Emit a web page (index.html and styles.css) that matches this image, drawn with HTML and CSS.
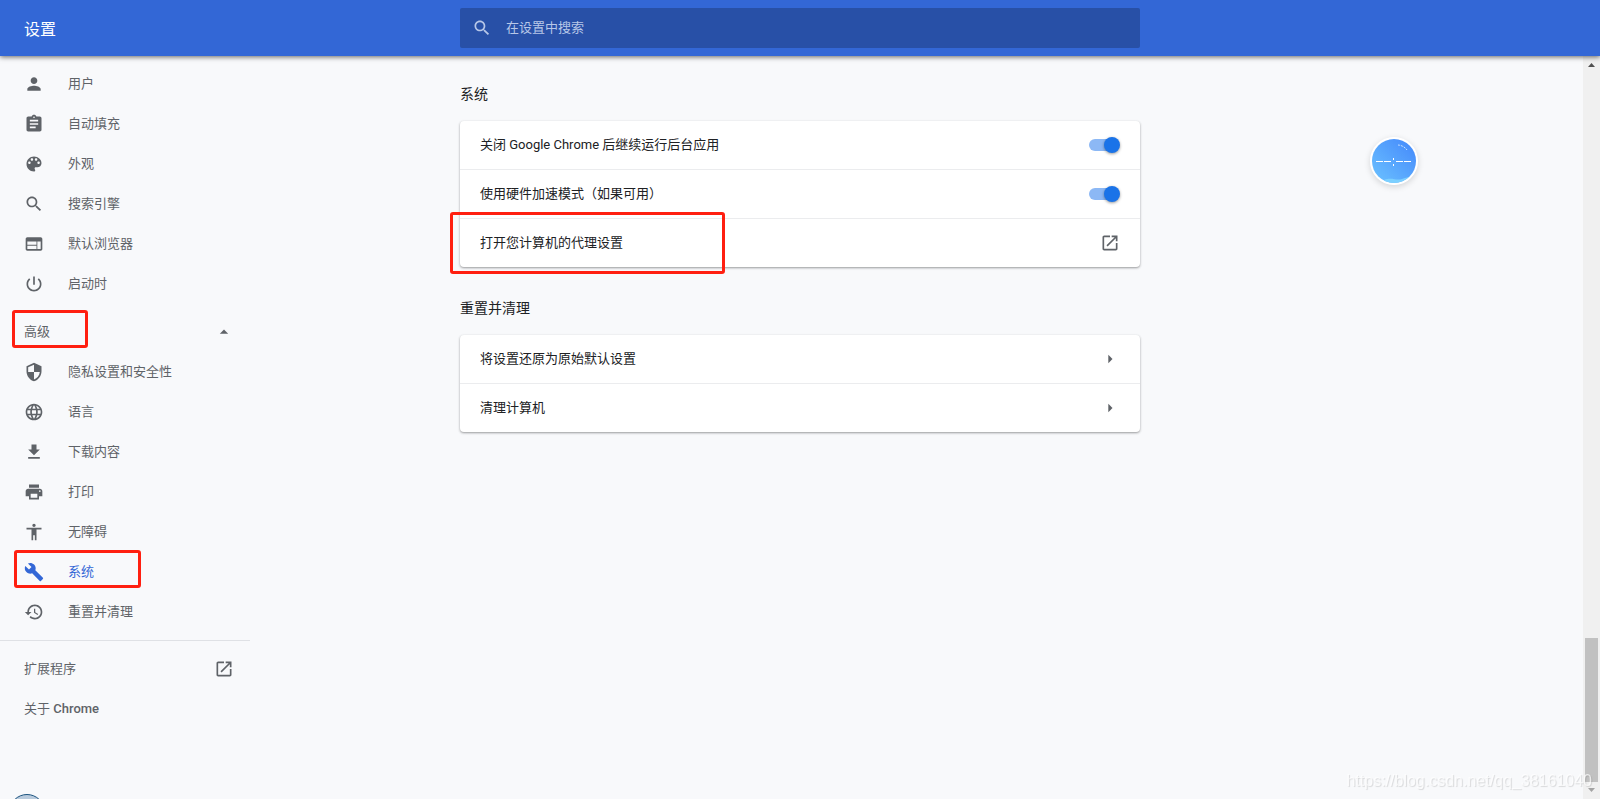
FILE: index.html
```html
<!DOCTYPE html>
<html lang="zh-CN">
<head>
<meta charset="utf-8">
<title>设置</title>
<link rel="stylesheet" href="styles.css">
</head>
<body>
<svg class="sprite" aria-hidden="true">
  <symbol id="search" viewBox="0 0 24 24"><path d="M15.5 14h-.79l-.28-.27C15.41 12.59 16 11.11 16 9.5 16 5.91 13.09 3 9.5 3S3 5.91 3 9.5 5.91 16 9.5 16c1.61 0 3.09-.59 4.23-1.57l.27.28v.79l5 4.99L20.49 19l-4.99-5zm-6 0C7.01 14 5 11.99 5 9.5S7.01 5 9.5 5 14 7.01 14 9.5 11.99 14 9.5 14z"/></symbol>
  <symbol id="launch" viewBox="0 0 24 24"><path d="M19 19H5V5h7V3H5c-1.11 0-2 .9-2 2v14c0 1.1.89 2 2 2h14c1.1 0 2-.9 2-2v-7h-2v7zM14 3v2h3.59l-9.83 9.83 1.41 1.41L19 6.41V10h2V3h-7z"/></symbol>
  <symbol id="next" viewBox="0 0 24 24"><path d="M10 17l5-5-5-5z"/></symbol>
</svg>
<header class="toolbar">
  <h1 class="toolbar-title">设置</h1>
  <label class="search">
    <svg class="icon search-icon"><use href="#search"/></svg>
    <input class="search-input" type="text" placeholder="在设置中搜索" aria-label="在设置中搜索">
  </label>
</header>
<div class="page">
  <nav class="sidebar">
    <a class="item" href="#people"><svg class="icon" viewBox="0 0 24 24"><path d="M12 12c2.21 0 4-1.79 4-4s-1.79-4-4-4-4 1.79-4 4 1.79 4 4 4zm0 2c-2.67 0-8 1.34-8 4v2h16v-2c0-2.66-5.33-4-8-4z"/></svg><span class="text">用户</span></a>
    <a class="item" href="#autofill"><svg class="icon" viewBox="0 0 24 24"><path d="M19 3h-4.18C14.4 1.84 13.3 1 12 1c-1.3 0-2.4.84-2.82 2H5c-1.1 0-2 .9-2 2v14c0 1.1.9 2 2 2h14c1.1 0 2-.9 2-2V5c0-1.1-.9-2-2-2zm-7 0c.55 0 1 .45 1 1s-.45 1-1 1-1-.45-1-1 .45-1 1-1zm2 14H7v-2h7v2zm3-4H7v-2h10v2zm0-4H7V7h10v2z"/></svg><span class="text">自动填充</span></a>
    <a class="item" href="#appearance"><svg class="icon" viewBox="0 0 24 24"><path d="M12 3c-4.97 0-9 4.03-9 9s4.03 9 9 9c.83 0 1.5-.67 1.5-1.5 0-.39-.15-.74-.39-1.01-.23-.26-.38-.61-.38-.99 0-.83.67-1.5 1.5-1.5H16c2.76 0 5-2.24 5-5 0-4.42-4.03-8-9-8zm-5.5 9c-.83 0-1.5-.67-1.5-1.5S5.67 9 6.5 9 8 9.67 8 10.5 7.33 12 6.500 12zm3-4C8.670 8 8 7.330 8 6.500S8.670 5 9.500 5s1.500.67 1.500 1.500S10.330 8 9.500 8zm5 0c-.83 0-1.500-.67-1.500-1.500S13.670 5 14.500 5s1.500.67 1.500 1.500S15.330 8 14.500 8zm3 4c-.83 0-1.500-.67-1.500-1.500S16.670 9 17.500 9s1.500.67 1.500 1.500-.67 1.500-1.500 1.500z"/></svg><span class="text">外观</span></a>
    <a class="item" href="#search-engine"><svg class="icon"><use href="#search"/></svg><span class="text">搜索引擎</span></a>
    <a class="item" href="#browser"><svg class="icon" viewBox="0 0 24 24"><path d="M20 4H4c-1.100 0-1.990.9-1.990 2L2 18c0 1.100.9 2 2 2h16c1.100 0 2-.9 2-2V6c0-1.100-.9-2-2-2zm-5 14H4v-4h11v4zm0-5H4V9h11v4zm5 5h-4V9h4v9z"/></svg><span class="text">默认浏览器</span></a>
    <a class="item" href="#startup"><svg class="icon" viewBox="0 0 24 24"><path d="M13 3h-2v10h2V3zm4.830 2.170l-1.420 1.420C17.990 7.860 19 9.810 19 12c0 3.870-3.130 7-7 7s-7-3.130-7-7c0-2.190 1.010-4.140 2.580-5.420L6.170 5.170C4.230 6.820 3 9.260 3 12c0 4.970 4.030 9 9 9s9-4.030 9-9c0-2.740-1.230-5.180-3.170-6.830z"/></svg><span class="text">启动时</span></a>
    <button class="item advanced" type="button" aria-expanded="true"><span class="text">高级</span><svg class="icon end" viewBox="0 0 24 24"><path d="M7 14l5-5 5 5z"/></svg><span class="mark mark-advanced"></span></button>
    <a class="item" href="#privacy"><svg class="icon" viewBox="0 0 24 24"><path d="M12 1L3 5v6c0 5.550 3.840 10.740 9 12 5.160-1.260 9-6.450 9-12V5l-9-4zm0 10.990h7c-.53 4.120-3.280 7.790-7 8.940V12H5V6.300l7-3.110v8.800z"/></svg><span class="text">隐私设置和安全性</span></a>
    <a class="item" href="#languages"><svg class="icon" viewBox="0 0 24 24"><path d="M11.990 2C6.470 2 2 6.480 2 12s4.470 10 9.990 10C17.520 22 22 17.520 22 12S17.520 2 11.990 2zm6.930 6h-2.950c-.32-1.250-.78-2.450-1.380-3.560 1.840.63 3.370 1.910 4.330 3.560zM12 4.040c.83 1.200 1.480 2.530 1.910 3.960h-3.820c.43-1.430 1.080-2.760 1.910-3.960zM4.260 14C4.100 13.360 4 12.690 4 12s.1-1.360.26-2h3.380c-.08.66-.14 1.320-.14 2s.06 1.340.14 2H4.260zm.82 2h2.950c.32 1.250.78 2.450 1.380 3.560-1.840-.63-3.370-1.900-4.330-3.560zm2.950-8H5.080c.96-1.660 2.490-2.930 4.330-3.560C8.810 5.550 8.350 6.750 8.030 8zM12 19.960c-.83-1.200-1.480-2.530-1.910-3.960h3.820c-.43 1.430-1.080 2.760-1.910 3.960zM14.340 14H9.660c-.09-.66-.16-1.320-.16-2s.07-1.350.16-2h4.680c.09.65.16 1.320.16 2s-.07 1.340-.16 2zm.25 5.560c.6-1.110 1.060-2.310 1.380-3.560h2.950c-.96 1.650-2.490 2.930-4.330 3.560zM16.360 14c.08-.66.14-1.320.14-2s-.06-1.340-.14-2h3.380c.16.64.26 1.310.26 2s-.1 1.360-.26 2h-3.380z"/></svg><span class="text">语言</span></a>
    <a class="item" href="#downloads"><svg class="icon" viewBox="0 0 24 24"><path d="M19 9h-4V3H9v6H5l7 7 7-7zM5 18v2h14v-2H5z"/></svg><span class="text">下载内容</span></a>
    <a class="item" href="#printing"><svg class="icon" viewBox="0 0 24 24"><path d="M19 8H5c-1.660 0-3 1.340-3 3v6h4v4h12v-4h4v-6c0-1.660-1.340-3-3-3zm-3 11H8v-5h8v5zm3-7c-.55 0-1-.45-1-1s.45-1 1-1 1 .45 1 1-.45 1-1 1zm-1-9H6v4h12V3z"/></svg><span class="text">打印</span></a>
    <a class="item" href="#accessibility"><svg class="icon" viewBox="0 0 24 24"><path d="M12 2c1.100 0 2 .9 2 2s-.9 2-2 2-2-.9-2-2 .9-2 2-2zm9 7h-6v13h-2v-6h-2v6H9V9H3V7h18v2z"/></svg><span class="text">无障碍</span></a>
    <a class="item selected" href="#system" aria-current="page"><svg class="icon" viewBox="0 0 24 24"><path d="M22.700 19l-9.100-9.100c.9-2.300.4-5-1.500-6.900-2-2-5-2.400-7.400-1.300L9 6 6 9 1.600 4.700C.4 7.100.9 10.100 2.900 12.100c1.900 1.900 4.600 2.400 6.900 1.500l9.100 9.100c.4.400 1 .4 1.400 0l2.300-2.300c.5-.4.5-1.100.1-1.400z"/></svg><span class="text">系统</span><span class="mark mark-system"></span></a>
    <a class="item" href="#reset"><svg class="icon" viewBox="0 0 24 24"><path d="M13 3c-4.970 0-9 4.030-9 9H1l3.890 3.890.07.14L9 12H6c0-3.870 3.130-7 7-7s7 3.130 7 7-3.130 7-7 7c-1.930 0-3.680-.79-4.940-2.060l-1.420 1.420C8.270 19.990 10.510 21 13 21c4.970 0 9-4.030 9-9s-4.030-9-9-9zm-1 5v5l4.280 2.540.72-1.210-3.500-2.080V8H12z"/></svg><span class="text">重置并清理</span></a>
    <hr class="rule">
    <a class="item" href="#extensions"><span class="text">扩展程序</span><svg class="icon end"><use href="#launch"/></svg></a>
    <a class="item" href="#about"><span class="text">关于 <span class="latin">Chrome</span></span></a>
    <span class="orb"></span>
  </nav>
  <main class="content">
    <section>
      <h2 class="heading">系统</h2>
      <div class="card">
        <label class="row"><span class="text">关闭 Google Chrome 后继续运行后台应用</span><input class="toggle" type="checkbox" checked></label>
        <label class="row"><span class="text">使用硬件加速模式<span class="paren">（</span>如果可用<span class="paren">）</span></span><input class="toggle" type="checkbox" checked></label>
        <button class="row" type="button"><span class="text">打开您计算机的代理设置</span><svg class="icon"><use href="#launch"/></svg><span class="mark mark-proxy"></span></button>
      </div>
    </section>
    <section>
      <h2 class="heading">重置并清理</h2>
      <div class="card">
        <button class="row" type="button"><span class="text">将设置还原为原始默认设置</span><svg class="icon"><use href="#next"/></svg></button>
        <button class="row" type="button"><span class="text">清理计算机</span><svg class="icon"><use href="#next"/></svg></button>
      </div>
    </section>
  </main>
  <div class="scrollbar" aria-hidden="true">
    <svg class="scroll-button" viewBox="0 0 17 17"><path fill="#505050" d="M5 11h7L8.500 7z"/></svg>
    <div class="track"><div class="thumb"></div></div>
    <svg class="scroll-button" viewBox="0 0 17 17"><path fill="#a3a3a3" d="M5 6h7l-3.500 4z"/></svg>
  </div>
</div>
<svg class="ball" viewBox="0 0 48 48" aria-hidden="true">
  <defs>
    <linearGradient id="sky" x1="0" y1="1" x2="1" y2="0"><stop offset="0" stop-color="#6cc3ff"/><stop offset="1" stop-color="#4387fb"/></linearGradient>
    <clipPath id="disc"><circle cx="24" cy="24" r="22"/></clipPath>
  </defs>
  <circle cx="24" cy="24" r="24" fill="#fff"/>
  <circle cx="24" cy="24" r="22" fill="url(#sky)"/>
  <path clip-path="url(#disc)" fill="#7cd0ff" d="M14 43c8-3 12 1 18-1 4-1 8-3 12-3v10H14z"/>
  <path stroke="#fff" d="M6 24.500h7M14 24.500h7M26 24.500h7M34 24.500h7"/>
  <path fill="#fff" d="M23 21h1v2h-1zM23 27h1v2h-1z"/>
  <path fill="none" stroke="#c5e0ff" stroke-dasharray="2 1" d="M28 8c3 0 7 2 9 5"/>
</svg>
<div class="watermark">https://blog.csdn.net/qq_38161040</div>
</body>
</html>
```
FILE: styles.css
```css
* { box-sizing: border-box; }

body {
  margin: 0;
  height: 100vh;
  display: flex;
  flex-direction: column;
  overflow: hidden;
  background: #f8f9fb;
  color: #202124;
  font-family: Roboto, "Noto Sans CJK SC", sans-serif;
  font-size: 13px;
  line-height: 20px;
}

button, input { font: inherit; }

.sprite { display: none; }

.icon {
  flex: none;
  width: 20px;
  height: 20px;
  fill: #5f6368;
}

.paren { font-family: "Noto Sans CJK TC", sans-serif; line-height: 1; }

.toolbar, .page {
  display: grid;
  grid-template-columns: minmax(250px, 1fr) minmax(0, 680px) minmax(17px, 1fr);
}

.toolbar {
  position: relative;
  z-index: 1;
  flex: none;
  height: 56px;
  align-items: center;
  background: #3367d6;
  box-shadow: 0 1px 5px rgba(0, 0, 0, 0.6);
}

.toolbar-title {
  margin: 0;
  padding: 4px 0 0 24px;
  color: #fff;
  font-size: 16px;
  font-weight: 400;
}

.search {
  height: 40px;
  display: flex;
  align-items: center;
  gap: 14px;
  padding: 0 12px;
  border-radius: 2px;
  background: #2850a7;
}

.search-icon { fill: #b7c7e8; }

.search-input {
  flex: 1;
  min-width: 0;
  height: 36px;
  padding: 0 0 2px;
  border: 0;
  outline: 0;
  background: none;
  color: #fff;
}

.search-input::placeholder { color: #b7c7e8; opacity: 1; }

.page { flex: 1; min-height: 0; }

.sidebar {
  position: relative;
  width: 250px;
  padding-top: 8px;
}

.item {
  position: relative;
  width: 100%;
  height: 40px;
  display: flex;
  align-items: center;
  gap: 24px;
  padding: 0 16px 0 24px;
  border: 0;
  background: none;
  color: #5f6368;
  text-align: left;
  text-decoration: none;
}

.advanced { margin-top: 8px; }

.end { margin-left: auto; }

.selected { color: #3367d6; }

.selected .icon { fill: #3367d6; }

.latin { font-weight: 500; }

.rule {
  height: 1px;
  margin: 8px 0;
  border: 0;
  background: #dfe1e5;
}

.mark {
  position: absolute;
  border: 3px solid #ff1f10;
  border-radius: 3px;
  pointer-events: none;
}

.mark-advanced { left: 12px; top: -2px; width: 76px; height: 38px; }

.mark-system { left: 14px; top: -2px; width: 127px; height: 38px; }

.mark-proxy { left: -10px; top: -7px; width: 275px; height: 62px; }

.orb {
  position: absolute;
  left: 9px;
  bottom: -31px;
  width: 36px;
  height: 36px;
  border: 1px solid #1d5580;
  border-radius: 50%;
  background: #b9cbdd;
}

.content { padding-top: 28px; }

.heading {
  margin: 0 0 17px;
  font-size: 14px;
  font-weight: 400;
  line-height: 20px;
}

.card {
  margin-bottom: 31px;
  border-radius: 4px;
  background: #fff;
  box-shadow: 0 1px 2px rgba(60, 64, 67, 0.35), 0 1px 3px rgba(60, 64, 67, 0.2);
}

.row {
  position: relative;
  width: 100%;
  min-height: 48px;
  display: flex;
  align-items: center;
  justify-content: space-between;
  padding: 0 20px;
  border: 0;
  background: none;
  color: inherit;
  text-align: left;
}

.row + .row {
  min-height: 49px;
  border-top: 1px solid #ebecee;
}

.toggle {
  appearance: none;
  position: relative;
  width: 32px;
  height: 16px;
  margin: 0;
}

.toggle::before {
  content: "";
  position: absolute;
  left: 1px;
  top: 2px;
  width: 28px;
  height: 12px;
  border-radius: 6px;
  background: #8cb8f5;
}

.toggle::after {
  content: "";
  position: absolute;
  right: 0;
  top: 0;
  width: 16px;
  height: 16px;
  border-radius: 50%;
  background: #1a73e8;
  box-shadow: 0 1px 3px rgba(0, 0, 0, 0.4);
}

.scrollbar {
  justify-self: end;
  width: 17px;
  display: flex;
  flex-direction: column;
  background: #f0f0f0;
}

.scroll-button { flex: none; width: 17px; height: 17px; }

.track {
  flex: 1;
  display: flex;
  flex-direction: column;
  justify-content: flex-end;
  padding: 0 2px;
}

.thumb { height: 144px; background: #c1c1c1; }

.ball {
  position: fixed;
  right: 182px;
  top: 137px;
  width: 48px;
  height: 48px;
  border-radius: 50%;
  box-shadow: 0 2px 6px rgba(0, 0, 0, 0.15);
}

.watermark {
  position: fixed;
  right: 8px;
  bottom: 8px;
  color: rgba(255, 255, 255, 0.7);
  font-family: "Liberation Sans", Arial, sans-serif;
  font-size: 16px;
  text-shadow: 1px 1px 1px rgba(0, 0, 0, 0.13);
}
```
